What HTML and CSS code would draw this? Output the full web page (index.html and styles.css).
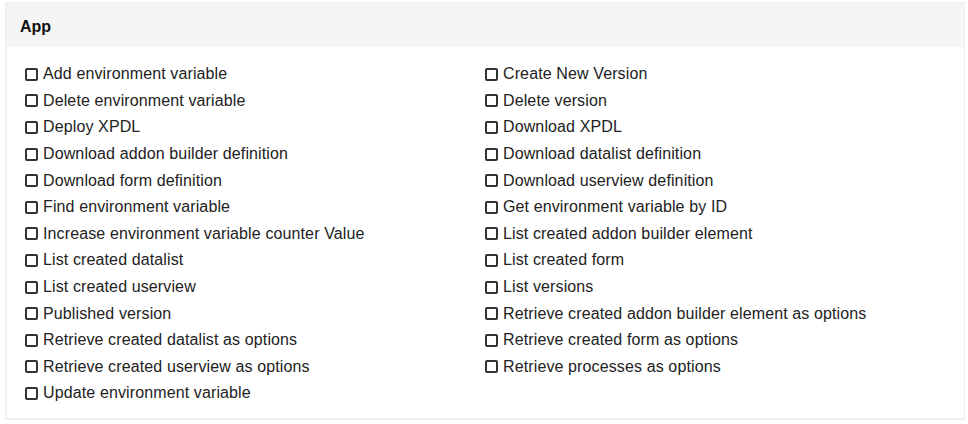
FILE: index.html
```html
<!DOCTYPE html>
<html>
<head>
<meta charset="utf-8">
<link rel="stylesheet" href="styles.css">
</head>
<body>
<div class="panel">
  <div class="panel-head">App</div>
  <div class="panel-body">
    <label class="opt"><span class="box"></span>Add environment variable</label>
    <label class="opt"><span class="box"></span>Create New Version</label>
    <label class="opt"><span class="box"></span>Delete environment variable</label>
    <label class="opt"><span class="box"></span>Delete version</label>
    <label class="opt"><span class="box"></span>Deploy XPDL</label>
    <label class="opt"><span class="box"></span>Download XPDL</label>
    <label class="opt"><span class="box"></span>Download addon builder definition</label>
    <label class="opt"><span class="box"></span>Download datalist definition</label>
    <label class="opt"><span class="box"></span>Download form definition</label>
    <label class="opt"><span class="box"></span>Download userview definition</label>
    <label class="opt"><span class="box"></span>Find environment variable</label>
    <label class="opt"><span class="box"></span>Get environment variable by ID</label>
    <label class="opt"><span class="box"></span>Increase environment variable counter Value</label>
    <label class="opt"><span class="box"></span>List created addon builder element</label>
    <label class="opt"><span class="box"></span>List created datalist</label>
    <label class="opt"><span class="box"></span>List created form</label>
    <label class="opt"><span class="box"></span>List created userview</label>
    <label class="opt"><span class="box"></span>List versions</label>
    <label class="opt"><span class="box"></span>Published version</label>
    <label class="opt"><span class="box"></span>Retrieve created addon builder element as options</label>
    <label class="opt"><span class="box"></span>Retrieve created datalist as options</label>
    <label class="opt"><span class="box"></span>Retrieve created form as options</label>
    <label class="opt"><span class="box"></span>Retrieve created userview as options</label>
    <label class="opt"><span class="box"></span>Retrieve processes as options</label>
    <label class="opt"><span class="box"></span>Update environment variable</label>
  </div>
</div>
</body>
</html>
```
FILE: styles.css
```css
html, body {
  margin: 0;
  padding: 0;
  background: #ffffff;
}
body {
  padding: 2px 3px 0 5px;
  font-family: "Liberation Sans", Arial, sans-serif;
  color: #222;
}
.panel {
  width: 960px;
  height: 418px;
  box-sizing: border-box;
  border: 1px solid #f0f0f0;
  border-left-width: 2px;
  border-bottom-width: 2px;
}
.panel-head {
  background: #f5f5f5;
  height: 44px;
  box-sizing: border-box;
  padding: 15px 0 0 13px;
  font-weight: bold;
  font-size: 16px;
  line-height: 18px;
  color: #111;
}
.panel-body {
  display: grid;
  grid-template-columns: 460px 460px;
  padding: 14px 0 0 18px;
  row-gap: 0;
}
.opt {
  display: flex;
  align-items: center;
  height: 26.6px;
  font-size: 16px;
  line-height: 18px;
  letter-spacing: 0.12px;
  white-space: nowrap;
}
.box {
  width: 9px;
  height: 9px;
  border: 2px solid #333;
  border-radius: 2px;
  margin: 0 5px 0 0;
  flex: none;
}
```
